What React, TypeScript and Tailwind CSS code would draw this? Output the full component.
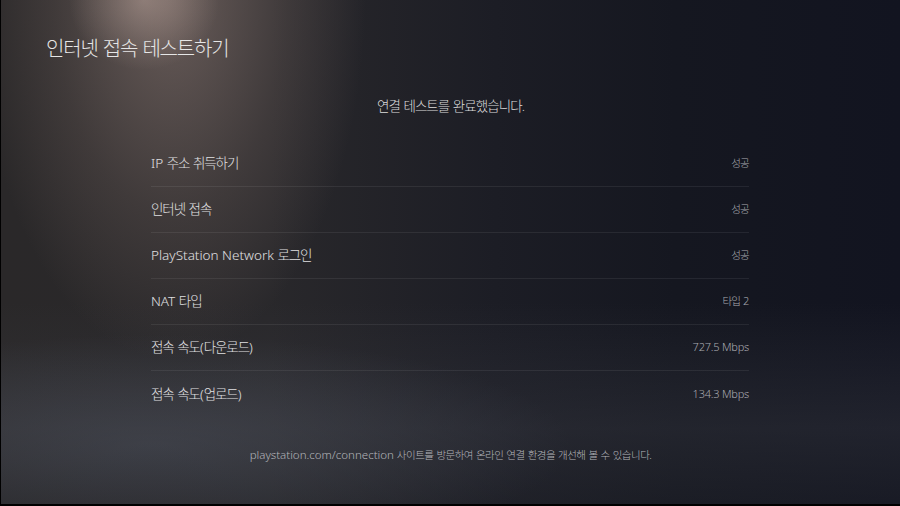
import React from 'react'

const rows = [
  { label: 'IP 주소 취득하기', value: '성공' },
  { label: '인터넷 접속', value: '성공' },
  { label: 'PlayStation Network 로그인', value: '성공' },
  { label: 'NAT 타입', value: '타입 2' },
  { label: '접속 속도(다운로드)', value: '727.5 Mbps' },
  { label: '접속 속도(업로드)', value: '134.3 Mbps' },
]

// Hangul runs get squeezed, the console font is narrower than Noto CJK
function Txt({ text, k }: { text: string; k: string }) {
  const parts = text.split(/([\uAC00-\uD7A3]+\.?)/)
  return (
    <>
      {parts.map((p, i) =>
        /[\uAC00-\uD7A3]/.test(p) ? (
          <span key={i} className={k}>{p}</span>
        ) : (
          <span key={i}>{p}</span>
        )
      )}
    </>
  )
}

export default function App() {
  return (
    <div
      className="relative w-[900px] h-[506px] overflow-hidden font-light text-[#e4e4e6] border-l border-b-2 border-black
        bg-[radial-gradient(ellipse_75px_70px_at_143px_0px,rgba(205,180,170,0.42),transparent_100%),radial-gradient(ellipse_195px_370px_at_170px_-10px,rgba(165,142,134,0.52),rgba(130,112,106,0.25)_60%,transparent_100%),radial-gradient(ellipse_420px_110px_at_150px_445px,rgba(95,102,118,0.42),transparent_100%),linear-gradient(to_right,#2a2829_0%,#29282b_30%,#1c1d25_55%,#151720_75%,#121420_100%)]"
      style={{ fontFamily: '"Noto Sans", "Noto Sans CJK KR", sans-serif' }}
    >
      <div className="absolute inset-0 bg-[linear-gradient(to_bottom,transparent_0%,transparent_60%,rgba(60,62,70,0.35)_85%,rgba(40,42,48,0.3)_100%)]" />

      <div className="relative flex flex-col h-full">
        {/* Title */}
        <h1 className="pl-[45px] pt-[35px] text-[20px] leading-[28px] text-[#e6e6e6]">
          <Txt text="인터넷 접속 테스트하기" k="tracking-[-0.06em]" />
        </h1>

        {/* Status */}
        <p className="mt-[33px] text-center text-[13.5px] leading-[20px] text-[#dcdcdc]">
          <Txt text="연결 테스트를 완료했습니다." k="tracking-[-0.07em]" />
        </p>

        {/* Results */}
        <div className="mx-[150px] mt-[25px] w-[598px]">
          {rows.map((row, i) => (
            <div
              key={row.label}
              className={`flex items-center justify-between h-[46px] ${
                i < rows.length - 1 ? 'border-b border-white/[0.07]' : ''
              }`}
            >
              <span className="text-[13.5px] text-[#e0e0e2]">
                <Txt text={row.label} k="tracking-[-0.08em]" />
              </span>
              <span className="text-[11px] text-[#a9aab0] tracking-[-0.02em]">
                <Txt text={row.value} k="text-[10.5px] tracking-[-0.07em]" />
              </span>
            </div>
          ))}
        </div>

        {/* Footer */}
        <p className="mt-[30px] text-center text-[11.5px] leading-[16px] text-[#b4b5ba]">
          <Txt
            text="playstation.com/connection 사이트를 방문하여 온라인 연결 환경을 개선해 볼 수 있습니다."
            k="text-[10.5px] tracking-[-0.05em]"
          />
        </p>
      </div>
    </div>
  )
}
